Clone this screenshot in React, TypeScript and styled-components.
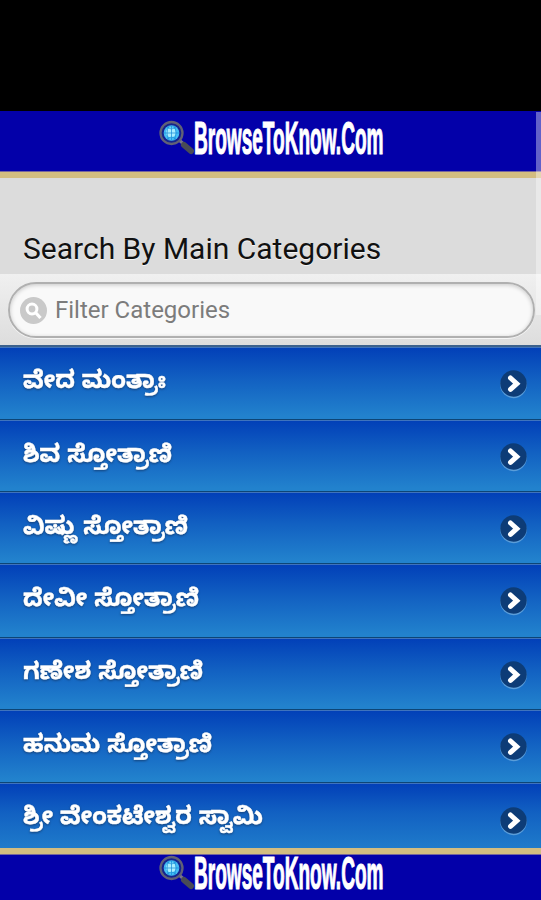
import React from "react";
import styled, { createGlobalStyle } from "styled-components";

const Global = createGlobalStyle`
  * { box-sizing: border-box; }
  body { margin: 0; background: #0300a9; font-family: Roboto, "Liberation Sans", sans-serif; }
`;

const Screen = styled.div`
  position: relative;
  width: 541px;
  height: 900px;
  overflow: hidden;
  display: flex;
  flex-direction: column;
`;

const StatusArea = styled.div`
  height: 111px;
  flex: none;
  background: #000;
`;

const Bar = styled.header<{ $bottom?: boolean }>`
  flex: none;
  height: ${(p) => (p.$bottom ? 52 : 67)}px;
  display: flex;
  justify-content: flex-start;
  padding: ${(p) => (p.$bottom ? "0 0 0 157px" : "7px 0 0 157px")};
  background: #0300a9;
  border: 0 solid #d3bd80;
  border-top-width: ${(p) => (p.$bottom ? 6 : 0)}px;
  border-bottom-width: ${(p) => (p.$bottom ? 0 : 6)}px;
  box-shadow: inset 0 ${(p) => (p.$bottom ? 1 : -1)}px 0 #77669b;
`;

const LogoArt = styled.svg<{ $bottom?: boolean }>`
  width: 230px;
  height: 40px;
  flex: none;
  margin-top: ${(p) => (p.$bottom ? -1 : 0)}px;
  overflow: visible;
`;

const TitleArea = styled.section`
  flex: none;
  height: 96px;
  background: #dcdcdc;
  padding: 53px 0 0 23px;
`;

const Title = styled.h1`
  margin: 0;
  font-size: 30px;
  line-height: 36px;
  font-weight: 400;
  color: #111;
  white-space: nowrap;
  text-shadow: 0 1px 0 #f4f4f4;
`;

const FilterArea = styled.div`
  flex: none;
  height: 71px;
  padding: 8px 6px 0 8px;
  background: linear-gradient(#f0f0f0, #dddddd);
`;

const FilterField = styled.label`
  display: flex;
  align-items: center;
  gap: 8px;
  height: 56px;
  padding-left: 10px;
  border: 2px solid #b0b0b0;
  border-radius: 28px;
  background: #f9f9f9;
  box-shadow: inset 0 1px 4px rgba(0, 0, 0, 0.2), 0 1px 0 #f6f6f6;
`;

const FilterInput = styled.input`
  border: 0;
  padding: 0;
  width: 420px;
  outline: 0;
  background: transparent;
  font: 400 24px/32px Roboto, sans-serif;
  &::placeholder { color: #7c7c7c; opacity: 1; }
`;

const List = styled.ul`
  flex: none;
  margin: 0;
  padding: 0;
  list-style: none;
  height: 503px;
  border-top: 2px solid #3c618c;
`;

const Row = styled.li<{ $h: number; $last?: boolean }>`
  height: ${(p) => p.$h}px;
  display: flex;
  justify-content: space-between;
  padding: 0 13px 0 23px;
  border-top: 1px solid #3f73bd;
  border-bottom: ${(p) => (p.$last ? "0" : "1px solid #0d4576")};
  background: linear-gradient(#0240b8, #1261c2 45%, #2282cd ${(p) => (p.$last ? "115%" : "96%")});
`;

const Label = styled.svg`
  width: 320px;
  height: 60px;
  overflow: visible;
  font-family: "Noto Sans Kannada", "Noto Sans", "Lato", sans-serif;
  font-size: 24px;
  font-weight: 700;
  fill: #fff;
  stroke: #fff;
  stroke-width: 0.4px;
  filter: drop-shadow(0 1px 1px #144178);
`;

const Arrow = styled.svg<{ $low?: boolean }>`
  width: 28px;
  height: 30px;
  margin-top: ${(p) => (p.$low ? 22 : 21)}px;
  flex: none;
`;

const ScrollThumb = styled.div`
  position: absolute;
  top: 112px;
  right: 0;
  width: 5px;
  height: 203px;
  background: rgba(255, 255, 255, 0.38);
`;

const rows = [
  { text: "ವೇದ ಮಂತ್ರಾಃ", width: 143, height: 73, baseline: 40 },
  { text: "ಶಿವ ಸ್ತೋತ್ರಾಣಿ", width: 149, height: 72, baseline: 41 },
  { text: "ವಿಷ್ಣು ಸ್ತೋತ್ರಾಣಿ", width: 165, height: 72, baseline: 41 },
  { text: "ದೇವೀ ಸ್ತೋತ್ರಾಣಿ", width: 176, height: 74, baseline: 41 },
  { text: "ಗಣೇಶ ಸ್ತೋತ್ರಾಣಿ", width: 180, height: 72, baseline: 40 },
  { text: "ಹನುಮ ಸ್ತೋತ್ರಾಣಿ", width: 189, height: 73, baseline: 41 },
  { text: "ಶ್ರೀ ವೇಂಕಟೇಶ್ವರ ಸ್ವಾಮಿ", width: 240, height: 65, baseline: 40 },
];

function Logo({ bottom = false }: { bottom?: boolean }) {
  return (
    <LogoArt viewBox="0 0 230 40" $bottom={bottom}>
      <path d="M22 22 L36 34" stroke="#77758c" strokeWidth="3" />
      <path d="M27 27 L34 33" stroke="#494b56" strokeWidth="6" strokeLinecap="round" />
      <circle cx="14.5" cy="15" r="11" fill="#15248e" stroke="#616176" strokeWidth="2.3" />
      <circle cx="14.5" cy="15" r="7.8" fill="#45bdf4" />
      <circle cx="14" cy="14.5" r="5" fill="#a9eeff" />
      <path
        d="M14.5 7.5v15M7 15h15M10 9.5q4.5 3 9 0M10 20.5q4.5-3 9 0M12 8q-4 7 0 14M17 8q4 7 0 14"
        fill="none"
        stroke="#168bd9"
        strokeWidth=".7"
      />
      <g transform="translate(37 36) scale(1 1.34)">
        <text
          x="0"
          y="0"
          textLength="189.5"
          lengthAdjust="spacingAndGlyphs"
          fill="#fff"
          stroke="#fff"
          strokeWidth=".9"
          fontFamily="Liberation Sans, sans-serif"
          fontWeight="700"
          fontSize="34"
        >
          BrowseToKnow.Com
        </text>
      </g>
    </LogoArt>
  );
}

function ArrowIcon({ low = false }: { low?: boolean }) {
  return (
    <Arrow viewBox="0 0 28 30" $low={low}>
      <circle cx="13.5" cy="16" r="13.2" fill="#5a9dd9" />
      <circle cx="13.5" cy="14.5" r="13.2" fill="#0d3c77" />
      <path
        d="M10.5 9l6.3 5.7-6.3 5.7"
        fill="none"
        stroke="#fff"
        strokeWidth="5"
        strokeLinecap="round"
      />
    </Arrow>
  );
}

export default function App() {
  return (
    <>
      <Global />
      <Screen>
        <StatusArea />
        <Bar>
          <Logo />
        </Bar>
        <TitleArea>
          <Title>Search By Main Categories</Title>
        </TitleArea>
        <FilterArea>
          <FilterField>
            <svg width="27" height="27" viewBox="0 0 27 27">
              <circle cx="13.5" cy="13.5" r="13.5" fill="#c9c9c9" />
              <circle cx="12" cy="12" r="4.9" fill="none" stroke="#fff" strokeWidth="3" />
              <path d="M15.5 15.5l5 5.5" stroke="#fff" strokeWidth="3.2" />
            </svg>
            <FilterInput placeholder="Filter Categories" />
          </FilterField>
        </FilterArea>
        <List>
          {rows.map((r, i) => (
            <Row key={r.text} $h={r.height} $last={i === rows.length - 1}>
              <Label>
                <text x="0" y={r.baseline} textLength={r.width} lengthAdjust="spacingAndGlyphs">
                  {r.text}
                </text>
              </Label>
              <ArrowIcon low={i === rows.length - 1} />
            </Row>
          ))}
        </List>
        <Bar as="footer" $bottom>
          <Logo bottom />
        </Bar>
        <ScrollThumb />
      </Screen>
    </>
  );
}
